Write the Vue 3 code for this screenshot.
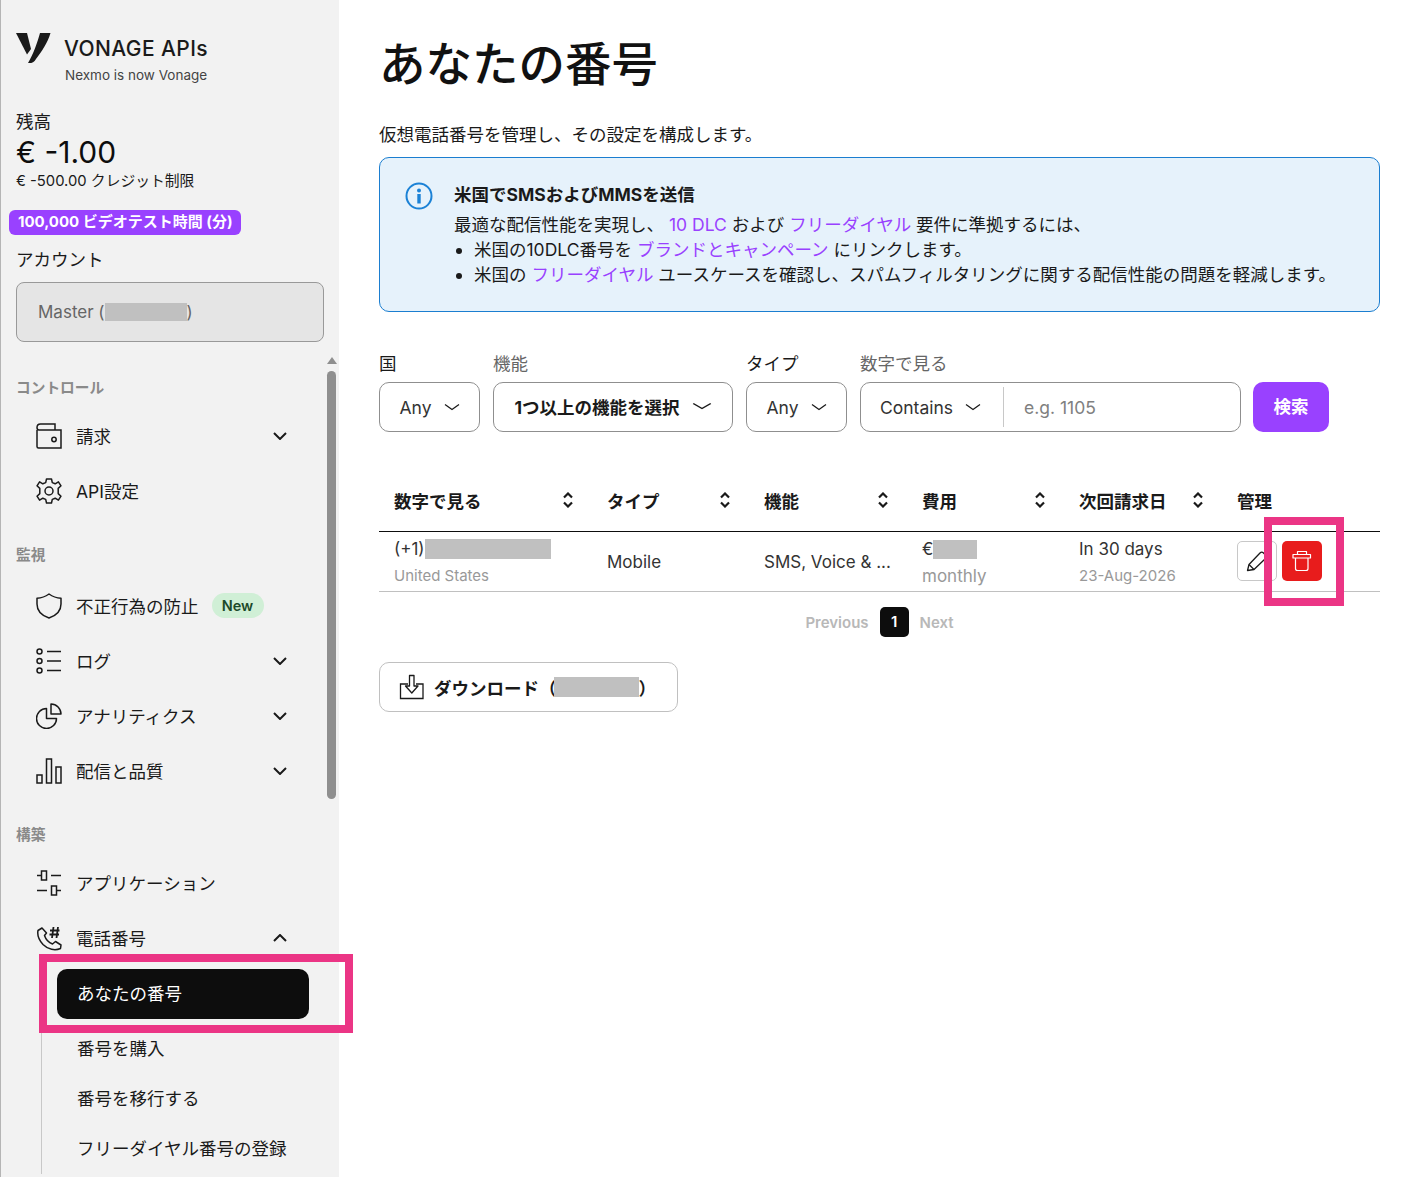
<script setup>
const filters = [
  { label: '国', value: 'Any', width: 101, dark: true },
  { label: '機能', value: '1つ以上の機能を選択', width: 240, bold: true, muted: true },
  { label: 'タイプ', value: 'Any', width: 101, dark: true },
]

const columns = ['数字で見る', 'タイプ', '機能', '費用', '次回請求日']
</script>

<template>
  <div class="page">
    <aside class="sidebar">
      <div class="brand">
        <svg class="brand-mark" width="36" height="32" viewBox="0 0 36 32">
          <path d="M0 0H11L15 16L11 21.500Z" fill="#1a1a1a" />
          <path d="M34.500 0H24C21.500 9 17.500 21 12 30C15 30.500 18 29.500 20 26C26 18 31.500 10 34.500 0Z" fill="#1a1a1a" />
        </svg>
        <div>
          <div class="brand-name">VONAGE APIs</div>
          <div class="brand-sub">Nexmo is now Vonage</div>
        </div>
      </div>

      <div class="balance">
        <div class="balance-label">残高</div>
        <div class="balance-value">€ -1.00</div>
        <div class="balance-limit">€ -500.00 クレジット制限</div>
      </div>
      <div class="video-badge">100,000 ビデオテスト時間 (分)</div>
      <div class="account-label">アカウント</div>
      <div class="account-box">Master (<span class="redact account-redact"></span>)</div>

      <div class="nav-wrap">
        <nav class="nav">
          <div class="nav-heading first">コントロール</div>
          <div class="nav-item">
            <svg class="nav-icon" viewBox="0 0 26 26"><path d="M1 7V23.500C1 24.300 1.700 25 2.500 25H25V7H3C1.800 7 1 6 1 4.500C1 2.500 2.500 1 4.500 1H19V7" /><circle cx="18" cy="16.500" r="2.200" /></svg>
            <span>請求</span>
            <svg class="nav-chevron" viewBox="0 0 14 8"><path d="M1 1L7 7L13 1" /></svg>
          </div>
          <div class="nav-item">
            <svg class="nav-icon" viewBox="0 0 26 26"><path d="M10.500 1H15.500L16.300 4.600L19.200 5.800L22.400 3.800L25 7.800L22.200 10.400V15.600L25 18.200L22.400 22.200L19.200 20.200L16.300 21.400L15.500 25H10.500L9.700 21.400L6.800 20.200L3.600 22.200L1 18.200L3.800 15.600V10.400L1 7.800L3.600 3.800L6.800 5.800L9.700 4.600Z" stroke-linejoin="round" /><circle cx="13" cy="13" r="4" /></svg>
            <span>API設定</span>
          </div>

          <div class="nav-heading">監視</div>
          <div class="nav-item">
            <svg class="nav-icon" viewBox="0 0 26 26"><path d="M13 1C9.500 3.500 5.500 5 1 5.300V11C1 17.500 5.500 22.500 13 25C20.500 22.500 25 17.500 25 11V5.300C20.500 5 16.500 3.500 13 1Z" stroke-linejoin="round" /></svg>
            <span>不正行為の防止</span>
            <span class="new-pill">New</span>
          </div>
          <div class="nav-item">
            <svg class="nav-icon" viewBox="0 0 26 26"><circle cx="3.500" cy="3.500" r="2.500" /><circle cx="3.500" cy="13" r="2.500" /><circle cx="3.500" cy="22.500" r="2.500" /><path d="M11 3.500H25M11 13H25M11 22.500H25" /></svg>
            <span>ログ</span>
            <svg class="nav-chevron" viewBox="0 0 14 8"><path d="M1 1L7 7L13 1" /></svg>
          </div>
          <div class="nav-item">
            <svg class="nav-icon" viewBox="0 0 26 26"><path d="M10.500 5.500A10 10 0 1 0 20.500 15.500H10.500Z" stroke-linejoin="round" /><path d="M15 1A10 10 0 0 1 25 11H15Z" stroke-linejoin="round" /></svg>
            <span>アナリティクス</span>
            <svg class="nav-chevron" viewBox="0 0 14 8"><path d="M1 1L7 7L13 1" /></svg>
          </div>
          <div class="nav-item">
            <svg class="nav-icon" viewBox="0 0 26 26"><rect x="1" y="17" width="5" height="8" /><rect x="10.500" y="1" width="5" height="24" /><rect x="20" y="9" width="5" height="16" /></svg>
            <span>配信と品質</span>
            <svg class="nav-chevron" viewBox="0 0 14 8"><path d="M1 1L7 7L13 1" /></svg>
          </div>

          <div class="nav-heading build">構築</div>
          <div class="nav-item">
            <svg class="nav-icon" viewBox="0 0 26 26"><rect x="5.500" y="1" width="5" height="9" /><rect x="15.500" y="16" width="5" height="9" /><path d="M1 5.500H5.500M15 5.500H25M1 20.500H11M20.500 20.500H25" /></svg>
            <span>アプリケーション</span>
          </div>
          <div class="nav-item">
            <svg class="nav-icon" viewBox="0 0 26 26"><path d="M6 3L2 5.500C1 10.500 3 15 7 19.500C12 24.500 19 26 24.500 23.500L25 20L19.500 16.500L16.500 19C12.500 17.500 9.500 13.500 8.500 10.500L10.500 8Z" stroke-linejoin="round" /><path class="hash" d="M17.500 2L16 13M22 2L20.500 13M14 5.500H23.500M13.500 9.500H23" /></svg>
            <span>電話番号</span>
            <svg class="nav-chevron" viewBox="0 0 14 8"><path d="M1 7L7 1L13 7" /></svg>
          </div>
          <div class="sub-nav">
            <div class="sub-item active">あなたの番号</div>
            <div class="sub-item">番号を購入</div>
            <div class="sub-item">番号を移行する</div>
            <div class="sub-item">フリーダイヤル番号の登録</div>
          </div>
        </nav>
        <div class="scroll-track">
          <div class="scroll-arrow"></div>
          <div class="scroll-thumb"></div>
        </div>
      </div>
      <div class="marker marker-nav"></div>
    </aside>

    <main class="main">
      <h1 class="title">あなたの番号</h1>
      <p class="intro">仮想電話番号を管理し、その設定を構成します。</p>

      <section class="notice">
        <svg class="notice-icon" width="28" height="28" viewBox="0 0 28 28">
          <circle cx="14" cy="14" r="12.500" fill="none" stroke="#1b82d6" stroke-width="2" />
          <circle cx="14" cy="8.500" r="2" fill="#1b82d6" />
          <rect x="12.300" y="12" width="3.400" height="9.500" fill="#1b82d6" />
        </svg>
        <div class="notice-body">
          <div class="notice-title">米国でSMSおよびMMSを送信</div>
          <div>最適な配信性能を実現し、 <a class="link">10 DLC</a> および <a class="link">フリーダイヤル</a> 要件に準拠するには、</div>
          <ul class="notice-list">
            <li>米国の10DLC番号を <a class="link">ブランドとキャンペーン</a> にリンクします。</li>
            <li>米国の <a class="link">フリーダイヤル</a> ユースケースを確認し、スパムフィルタリングに関する配信性能の問題を軽減します。</li>
          </ul>
        </div>
      </section>

      <section class="filters">
        <div v-for="f in filters" :key="f.label" class="filter" :style="{ width: f.width + 'px' }">
          <div class="filter-label" :class="{ muted: f.muted }">{{ f.label }}</div>
          <div class="select" :class="{ bold: f.bold }">
            <span>{{ f.value }}</span>
            <svg class="select-chevron" viewBox="0 0 16 8" preserveAspectRatio="none"><path d="M1 1.500L8 6.500L15 1.500" /></svg>
          </div>
        </div>
        <div class="filter number-filter">
          <div class="filter-label muted">数字で見る</div>
          <div class="select combo">
            <div class="combo-left">
              <span>Contains</span>
              <svg class="select-chevron" viewBox="0 0 16 8"><path d="M1 1.500L8 6.500L15 1.500" /></svg>
            </div>
            <div class="combo-input">e.g. 1105</div>
          </div>
        </div>
        <button class="search-btn">検索</button>
      </section>

      <section class="table">
        <div class="table-head">
          <div v-for="c in columns" :key="c" class="th">
            <span>{{ c }}</span>
            <svg class="sort" viewBox="0 0 10 16"><path d="M1 5.500L5 1.500L9 5.500M1 10.500L5 14.500L9 10.500" /></svg>
          </div>
          <div class="th">管理</div>
        </div>
        <div class="table-row">
          <div class="td">
            <div class="num-line">(+1)<span class="redact num-redact"></span></div>
            <div class="sub-text">United States</div>
          </div>
          <div class="td center">Mobile</div>
          <div class="td center">SMS, Voice &amp; ...</div>
          <div class="td">
            <div class="num-line">€<span class="redact cost-redact"></span></div>
            <div class="sub-text large">monthly</div>
          </div>
          <div class="td">
            <div class="num-line">In 30 days</div>
            <div class="sub-text">23-Aug-2026</div>
          </div>
          <div class="td actions">
            <button class="icon-btn edit">
              <svg width="22" height="22" viewBox="0 0 22 22" fill="none" stroke="#1a1a1a" stroke-width="1.300"><path d="M1.500 20.500L3 14.500L14 3C15 2 16.500 2 17.500 3L19.500 5C20.500 6 20.500 7.500 19.500 8.500L8 19.500Z" stroke-linejoin="round" /><path d="M3 14.500L8 19.500" /></svg>
            </button>
            <button class="icon-btn trash">
              <svg width="20" height="22" viewBox="0 0 20 22" fill="none" stroke="#fff" stroke-width="1.200"><path d="M1 4.500H18.500V8H1ZM3.500 8V18.500C3.500 19.800 4.200 20.500 5.500 20.500H14C15.300 20.500 16 19.800 16 18.500V8M5.500 4.500V1.500H14.500V4.500" stroke-linejoin="round" /></svg>
            </button>
            <div class="marker marker-trash"></div>
          </div>
        </div>
      </section>

      <div class="pager">
        <span>Previous</span>
        <span class="page-num">1</span>
        <span>Next</span>
      </div>

      <button class="download">
        <svg width="26" height="26" viewBox="0 0 26 26" fill="none" stroke="#1a1a1a" stroke-width="1.300"><path d="M9 10H1.500V24.500H24V10H17" /><path d="M10.500 1.500H15V12H19L12.800 19L6.500 12H10.500Z" stroke-linejoin="round" /></svg>
        <span>ダウンロード（</span><span class="redact download-redact"></span><span>）</span>
      </button>
    </main>
  </div>
</template>

<style>
html,
body {
  margin: 0;
  background: #fff;
}
</style>

<style scoped>
.page {
  display: flex;
  height: 1177px;
  overflow: hidden;
  font-family: Inter, "Noto Sans CJK JP", sans-serif;
  color: #1a1a1a;
  font-size: 17.500px;
}
.sidebar {
  position: relative;
  width: 339px;
  flex: none;
  box-sizing: border-box;
  background: #f2f2f2;
  border-left: 1px solid #b5b5b5;
  padding-left: 15px;
}
.brand {
  display: flex;
  gap: 12px;
  padding-top: 33px;
  height: 100px;
  box-sizing: border-box;
}
.brand-mark {
  flex: none;
}
.brand-name {
  font-size: 21px;
  font-weight: 500;
  line-height: 32px;
  letter-spacing: 0.400px;
}
.brand-sub {
  font-size: 13.500px;
  line-height: 18px;
  margin-top: 1px;
  margin-left: 1px;
  color: #444;
}
.balance {
  padding-top: 11px;
}
.balance-label {
  line-height: 22px;
}
.balance-value {
  font-size: 30px;
  line-height: 39px;
  color: #0d0d0d;
}
.balance-limit {
  font-size: 14.800px;
  line-height: 18px;
}
.video-badge {
  width: 232px;
  height: 25px;
  margin: 20px 0 0 -7px;
  box-sizing: border-box;
  padding-left: 9px;
  border-radius: 6px;
  background: #9941ff;
  color: #fff;
  font-size: 15px;
  font-weight: 700;
  line-height: 23px;
}
.account-label {
  line-height: 24px;
  margin-top: 13px;
}
.account-box {
  display: flex;
  align-items: center;
  width: 308px;
  height: 60px;
  margin-top: 10px;
  box-sizing: border-box;
  padding-left: 21px;
  background: #e5e5e5;
  border: 1px solid #999;
  border-radius: 8px;
  color: #666;
  font-size: 17px;
}
.redact {
  display: inline-block;
  background: #c0c0c0;
}
.account-redact {
  width: 82px;
  height: 18px;
}
.nav-wrap {
  display: flex;
  margin-top: 13px;
  height: 820px;
  overflow: hidden;
}
.nav {
  width: 311px;
  flex: none;
}
.nav-heading {
  font-size: 14.700px;
  font-weight: 700;
  color: #8a8a8a;
  line-height: 20px;
  margin: 27px 0 13px;
}
.nav-heading.first {
  margin-top: 23px;
  margin-bottom: 10px;
}
.nav-heading.build {
  margin-top: 27px;
  margin-bottom: 10px;
}
.nav-item {
  display: flex;
  align-items: center;
  height: 55px;
  padding-left: 20px;
}
.nav-icon {
  width: 26px;
  height: 26px;
  flex: none;
  margin-right: 14px;
  fill: none;
  stroke: #1a1a1a;
  stroke-width: 1.500;
}
.hash {
  stroke-width: 1.800;
}
.nav-chevron {
  width: 14px;
  height: 8px;
  margin-left: auto;
  margin-right: 40px;
  margin-top: 1px;
  fill: none;
  stroke: #1a1a1a;
  stroke-width: 2;
}
.new-pill {
  margin-left: 13px;
  width: 52px;
  height: 25px;
  border-radius: 13px;
  background: #d0efd6;
  color: #1c4a2a;
  font-size: 14.500px;
  font-weight: 600;
  line-height: 25px;
  text-align: center;
}
.sub-nav {
  margin: 4px 0 0 25px;
  border-left: 1px solid #c8c8c8;
  padding-left: 15px;
  display: flex;
  flex-direction: column;
}
.sub-item {
  height: 50px;
  line-height: 50px;
  padding-left: 20px;
}
.sub-item.active {
  width: 252px;
  box-sizing: border-box;
  background: #0d0d0d;
  color: #fff;
  border-radius: 10px;
  margin-bottom: 5px;
}
.scroll-track {
  width: 10px;
  flex: none;
}
.scroll-arrow {
  width: 0;
  height: 0;
  margin: 2px auto 0;
  border: 5px solid transparent;
  border-top: 0;
  border-bottom: 7px solid #8f8f8f;
}
.scroll-thumb {
  width: 9px;
  height: 428px;
  margin: 7px 0 0 0;
  border-radius: 5px;
  background: #8f8f8f;
}
.marker {
  position: absolute;
  box-sizing: border-box;
  border: 8px solid #eb3585;
  pointer-events: none;
}
.marker-nav {
  left: 38px;
  top: 954px;
  width: 314px;
  height: 79px;
}
.main {
  flex: 1;
  min-width: 0;
  padding: 0 39px 0 40px;
}
.title {
  margin: 0;
  padding-top: 31px;
  font-size: 46.500px;
  font-weight: 500;
  line-height: 66px;
  letter-spacing: 0;
  color: #111;
}
.intro {
  margin: 27px 0 0;
  line-height: 22px;
}
.notice {
  display: flex;
  height: 155px;
  margin-top: 11px;
  box-sizing: border-box;
  border: 1px solid #1b7ed0;
  border-radius: 10px;
  background: #e6f2fb;
  padding: 24px 0 0 25px;
  line-height: 25px;
}
.notice-icon {
  flex: none;
  margin-right: 21px;
}
.notice-title {
  font-weight: 700;
  margin-bottom: 5px;
}
.notice-list {
  margin: 0;
  padding-left: 20px;
}
.link {
  color: #9941ff;
}
.filters {
  display: flex;
  align-items: flex-end;
  gap: 13px;
  margin-top: 40px;
}
.filter-label {
  line-height: 24px;
  margin-bottom: 6px;
}
.filter-label.muted {
  color: #666;
}
.select {
  display: flex;
  align-items: center;
  justify-content: center;
  gap: 12px;
  height: 50px;
  box-sizing: border-box;
  border: 1px solid #8f8f8f;
  border-radius: 10px;
  color: #333;
}
.select.bold {
  font-weight: 700;
  color: #1a1a1a;
  padding-bottom: 2px;
}
.select-chevron {
  width: 16px;
  height: 8px;
  fill: none;
  stroke: #1a1a1a;
  stroke-width: 1.300;
}
.select.bold .select-chevron {
  width: 20px;
}
.number-filter {
  width: 381px;
}
.combo {
  justify-content: flex-start;
  gap: 0;
}
.combo-left {
  display: flex;
  align-items: center;
  gap: 12px;
  height: 40px;
  width: 143px;
  box-sizing: border-box;
  padding-left: 19px;
  border-right: 1px solid #c8c8c8;
}
.combo-input {
  padding-left: 20px;
  color: #808080;
}
.search-btn {
  width: 76px;
  height: 50px;
  margin-left: -1px;
  padding: 0 0 3px;
  border: 0;
  border-radius: 10px;
  background: #9941ff;
  color: #fff;
  font-family: inherit;
  font-size: 17.500px;
  font-weight: 700;
}
.table {
  margin-top: 40px;
}
.table-head,
.table-row {
  display: grid;
  grid-template-columns: 213px 157px 158px 157px 158px 158px;
}
.table-head {
  height: 60px;
  padding-bottom: 3px;
  border-bottom: 1px solid #0d0d0d;
  box-sizing: border-box;
}
.th {
  display: flex;
  align-items: center;
  justify-content: space-between;
  padding: 0 19px 0 15px;
  font-weight: 700;
  box-sizing: border-box;
}
.sort {
  width: 10px;
  height: 16px;
  fill: none;
  stroke: #1a1a1a;
  stroke-width: 2.200;
}
.table-row {
  height: 60px;
  box-sizing: border-box;
  border-bottom: 1px solid #c0c0c0;
}
.td {
  position: relative;
  padding: 0 15px;
  font-size: 17px;
  color: #333;
}
.td.center {
  display: flex;
  align-items: center;
  box-sizing: border-box;
}
.num-line {
  display: flex;
  align-items: center;
  height: 20px;
  margin-top: 7px;
}
.num-redact {
  width: 126px;
  height: 20px;
}
.cost-redact {
  width: 44px;
  height: 19px;
}
.sub-text {
  font-size: 15px;
  line-height: 20px;
  margin-top: 7px;
  color: #999;
}
.sub-text.large {
  font-size: 17px;
}
.actions {
  display: flex;
  gap: 5px;
  align-items: flex-start;
  padding-top: 9px;
  box-sizing: border-box;
}
.icon-btn {
  display: flex;
  align-items: center;
  justify-content: center;
  width: 40px;
  height: 40px;
  box-sizing: border-box;
  padding: 0;
  border-radius: 5px;
}
.edit {
  background: #fff;
  border: 1px solid #c8c8c8;
}
.trash {
  background: #e81c1c;
  border: 0;
}
.marker-trash {
  left: 42px;
  top: -15px;
  width: 80px;
  height: 89px;
}
.pager {
  display: flex;
  justify-content: center;
  align-items: center;
  gap: 11px;
  height: 30px;
  margin-top: 15px;
  font-size: 15px;
  font-weight: 600;
  color: #b8b8b8;
}
.page-num {
  width: 29px;
  height: 30px;
  line-height: 30px;
  text-align: center;
  border-radius: 5px;
  background: #0d0d0d;
  color: #fff;
}
.download {
  display: flex;
  align-items: center;
  width: 299px;
  height: 50px;
  margin-top: 25px;
  box-sizing: border-box;
  padding: 0 0 0 19px;
  background: #fff;
  border: 1px solid #c0c0c0;
  border-radius: 10px;
  font-family: inherit;
  font-size: 17.500px;
  font-weight: 700;
  color: #1a1a1a;
}
.download svg {
  margin-right: 9px;
}
.download-redact {
  width: 85px;
  height: 20px;
  margin-left: -3px;
}
</style>
